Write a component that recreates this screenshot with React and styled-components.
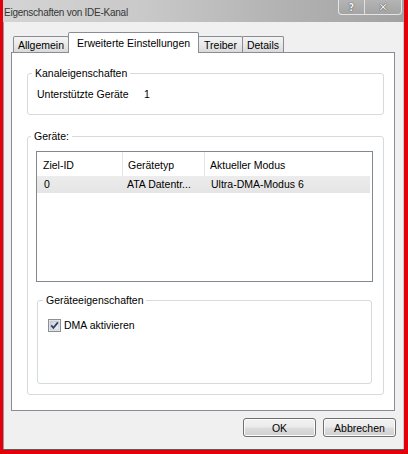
import React from 'react';
import styled, { createGlobalStyle } from 'styled-components';

const GlobalStyle = createGlobalStyle`
  html, body { margin: 0; padding: 0; background: #e3000b; }
  body {
    font-family: "Liberation Sans", Arial, sans-serif;
    font-size: 10.5px;
    color: #000;
  }
  * { box-sizing: border-box; }
`;

const Frame = styled.div`
  width: 408px;
  height: 454px;
  background: #e3000b;
  padding: 0 4px 4px 3px;
  display: flex;
`;

const Window = styled.div`
  flex: 1;
  display: flex;
  flex-direction: column;
  border-bottom: 1px solid #5c5c5c;
`;

const TitleBar = styled.div`
  height: 22px;
  flex: none;
  display: flex;
  align-items: flex-start;
  padding-left: 1px;
  background: linear-gradient(to right, #d4d4d4 0%, #c9c9c9 35%, #b2b2b2 70%, #a2a2a2 100%);
`;

const Title = styled.span`
  font-size: 10px;
  letter-spacing: -0.25px;
  color: #363636;
  line-height: 20px;
  padding-top: 3px;
`;

const CaptionGroup = styled.div`
  margin-left: auto;
  margin-right: 2px;
  display: flex;
  height: 15px;
  border: 1px solid #e4e4e4;
  border-top: none;
  border-radius: 0 0 4px 4px;
  overflow: hidden;
  background: linear-gradient(#b4b4b4, #a4a4a4);
`;

const CaptionButton = styled.div`
  width: ${p => p.$w}px;
  display: flex;
  align-items: center;
  justify-content: center;
  font-family: "DejaVu Sans", sans-serif;
  font-weight: bold;
  font-size: ${p => p.$fs}px;
  color: #f2f2f2;
  text-shadow: 0 0 1px #444, 0 0 1px #444;
  & + & { border-left: 1px solid #e0e0e0; }
`;

const Client = styled.div`
  flex: 1;
  display: flex;
  flex-direction: column;
  background: #f0f0f0;
  border-left: 1px solid #9a9a9a;
  border-right: 1px solid #c9c9c9;
  padding: 10px 8px 12px 7px;
`;

const TabStrip = styled.div`
  height: 20px;
  flex: none;
  display: flex;
  align-items: flex-end;
  padding-left: 2px;
`;

const Tab = styled.div`
  position: relative;
  z-index: ${p => (p.$active ? 2 : 1)};
  width: ${p => p.$w}px;
  height: ${p => (p.$active ? 21 : 16)}px;
  margin-bottom: ${p => (p.$active ? -1 : 0)}px;
  line-height: ${p => (p.$active ? 20 : 16)}px;
  text-align: center;
  white-space: nowrap;
  border: 1px solid #898c95;
  border-bottom: none;
  border-radius: 2px 2px 0 0;
  background: ${p =>
    p.$active ? '#ffffff' : 'linear-gradient(#f4f4f4 0%, #e9e9e9 50%, #dadada 100%)'};
  & + & { margin-left: -1px; }
`;

const Panel = styled.div`
  flex: 1;
  display: flex;
  flex-direction: column;
  background: #fff;
  border: 1px solid #898c95;
  padding: 14px 10px 0 15px;
`;

const Group = styled.fieldset`
  margin: ${p => p.$mt || 0}px ${p => p.$mx || 0}px 0;
  min-width: 0;
  border: 1px solid #d5dadd;
  border-radius: 3px;
  padding: ${p => p.$pad};
`;

const Legend = styled.legend`
  line-height: 12px;
  padding: 0 3px;
  margin-left: -5px;
`;

const InfoRow = styled.div`
  display: grid;
  grid-template-columns: 107px auto;
  line-height: 12px;
`;

const ListView = styled.div`
  height: 131px;
  border: 1px solid #828790;
  background: #fff;
  display: flex;
  flex-direction: column;
`;

const HeaderRow = styled.div`
  display: flex;
  height: 24px;
`;

const HeaderCell = styled.div`
  width: ${p => (p.$w ? `${p.$w}px` : 'auto')};
  flex: ${p => (p.$w ? 'none' : '1')};
  padding: 7px 0 0 5px;
  line-height: 12px;
  white-space: nowrap;
  border-right: ${p => (p.$w ? '1px solid #e3e3e3' : 'none')};
  &:first-child { padding-left: 6px; }
`;

const DataRow = styled.div`
  display: flex;
  height: 17px;
  margin-right: 2px;
  background: linear-gradient(#ececec, #e5e5e5);
`;

const DataCell = styled.div`
  width: ${p => (p.$w ? `${p.$w}px` : 'auto')};
  flex: ${p => (p.$w ? 'none' : '1')};
  padding-left: ${p => p.$pl}px;
  line-height: 17px;
  white-space: nowrap;
`;

const CheckRow = styled.label`
  display: flex;
  align-items: center;
  gap: 3px;
  height: 13px;
  line-height: 13px;
`;

const ButtonRow = styled.div`
  flex: none;
  display: flex;
  justify-content: flex-end;
  gap: 7px;
  margin-top: 7px;
  margin-right: -1px;
`;

const Button = styled.button`
  width: 73px;
  height: 19px;
  padding: 0;
  font-family: "Liberation Sans", Arial, sans-serif;
  font-size: 10.5px;
  color: #000;
  border: 1px solid #707070;
  border-radius: 3px;
  box-shadow: inset 0 0 0 1px #fbfbfb;
  background: linear-gradient(#f2f2f2 0%, #ebebeb 48%, #dddddd 52%, #cfcfcf 100%);
`;

const CheckIcon = () => (
  <svg width="13" height="13" viewBox="0 0 13 13">
    <defs>
      <linearGradient id="cbg" x1="0" y1="0" x2="1" y2="1">
        <stop offset="0" stopColor="#c9cfd9" />
        <stop offset="1" stopColor="#f3f4f7" />
      </linearGradient>
    </defs>
    <rect x="0.5" y="0.5" width="12" height="12" fill="#f4f4f4" stroke="#8e8f8f" />
    <rect x="2" y="2" width="9" height="9" fill="url(#cbg)" stroke="#b3b8c2" strokeWidth="0.6" />
    <path d="M3.2 6.4 L5.4 8.9 L9.9 3.4" fill="none" stroke="#33406b" strokeWidth="1.7" />
  </svg>
);

export default function App() {
  return (
    <>
      <GlobalStyle />
      <Frame>
        <Window>
          <TitleBar>
            <Title>Eigenschaften von IDE-Kanal</Title>
            <CaptionGroup>
              <CaptionButton $w={25} $fs={10}>?</CaptionButton>
              <CaptionButton $w={37} $fs={11}>✕</CaptionButton>
            </CaptionGroup>
          </TitleBar>
          <Client>
            <TabStrip>
              <Tab $w={56}>Allgemein</Tab>
              <Tab $w={131} $active>Erweiterte Einstellungen</Tab>
              <Tab $w={45}>Treiber</Tab>
              <Tab $w={42}>Details</Tab>
            </TabStrip>
            <Panel>
              <Group $pad="9px 8px 14px 9px">
                <Legend>Kanaleigenschaften</Legend>
                <InfoRow>
                  <span>Unterstützte Geräte</span>
                  <span>1</span>
                </InfoRow>
              </Group>
              <Group $mt={15} $pad="9px 10px 10px 8px">
                <Legend>Geräte:</Legend>
                <ListView>
                  <HeaderRow>
                    <HeaderCell $w={86}>Ziel-ID</HeaderCell>
                    <HeaderCell $w={82}>Gerätetyp</HeaderCell>
                    <HeaderCell>Aktueller Modus</HeaderCell>
                  </HeaderRow>
                  <DataRow>
                    <DataCell $w={86} $pl={7}>0</DataCell>
                    <DataCell $w={82} $pl={4}>ATA Datentr...</DataCell>
                    <DataCell $pl={6}>Ultra-DMA-Modus 6</DataCell>
                  </DataRow>
                </ListView>
                <Group $mt={12} $mx={1} $pad="13px 10px 51px 10px">
                  <Legend>Geräteeigenschaften</Legend>
                  <CheckRow>
                    <CheckIcon />
                    <span>DMA aktivieren</span>
                  </CheckRow>
                </Group>
              </Group>
            </Panel>
            <ButtonRow>
              <Button>OK</Button>
              <Button>Abbrechen</Button>
            </ButtonRow>
          </Client>
        </Window>
      </Frame>
    </>
  );
}
